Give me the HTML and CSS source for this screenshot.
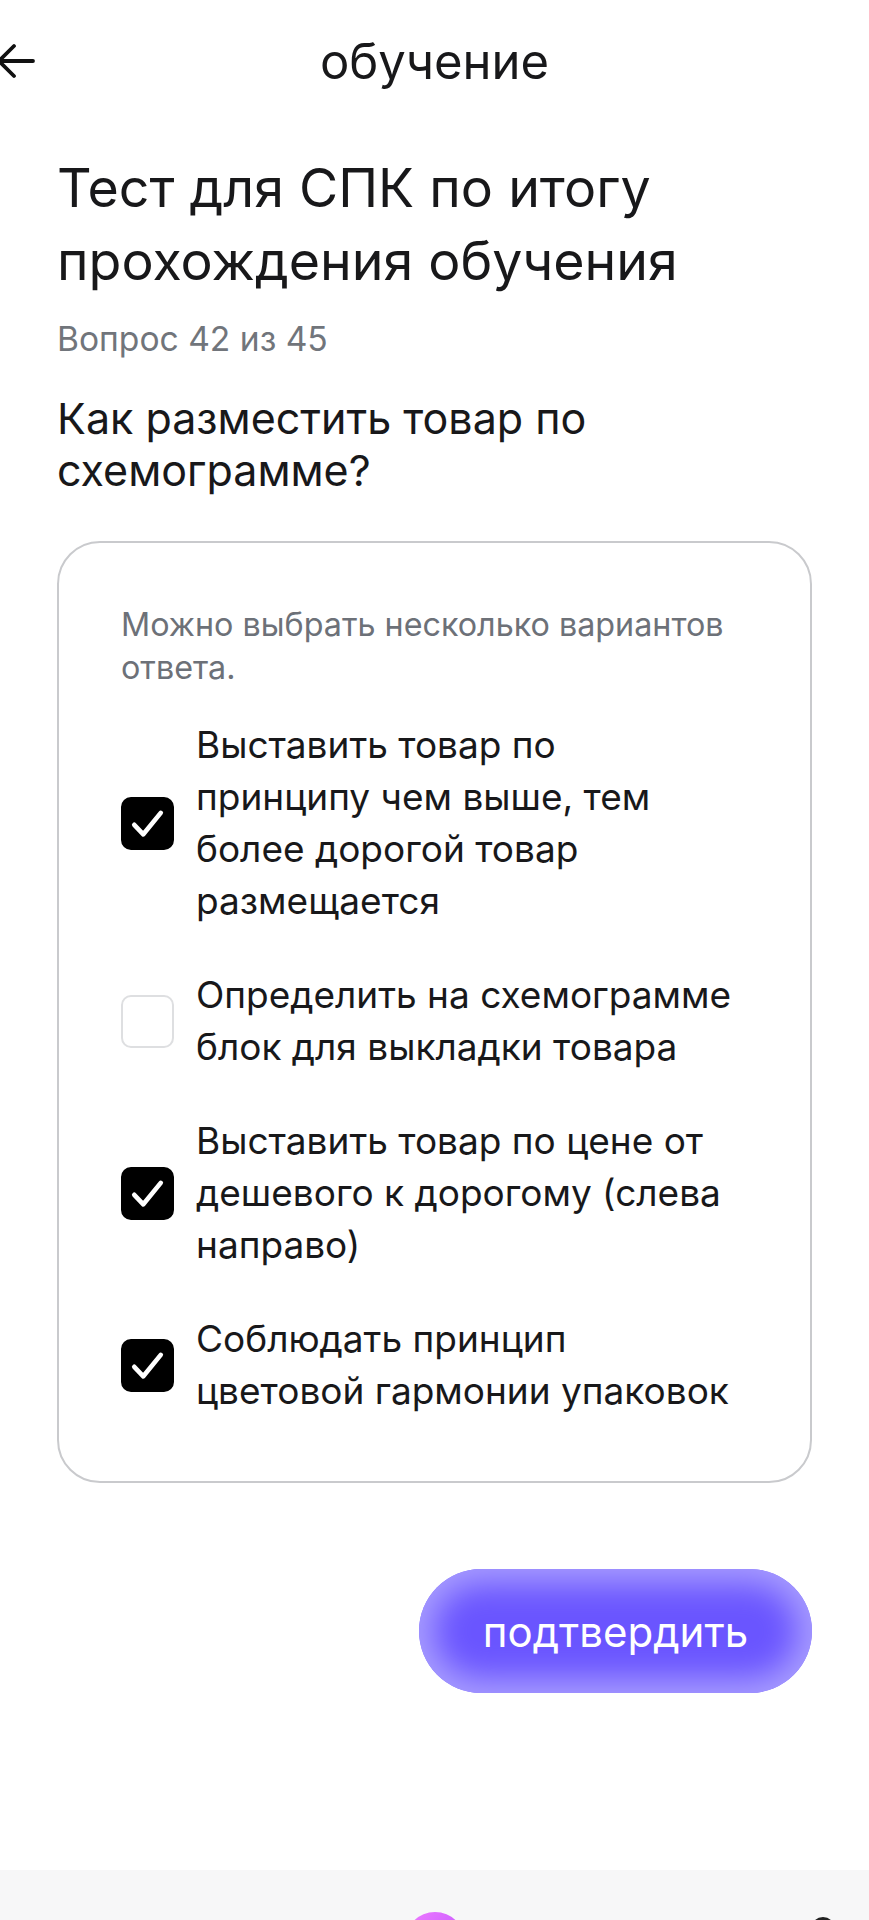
FILE: index.html
```html
<!DOCTYPE html>
<html lang="ru">
<head>
<meta charset="utf-8">
<title>обучение</title>
<link rel="stylesheet" href="styles.css">
</head>
<body>
<div class="page">
  <header class="topbar">
    <button class="back" aria-label="назад">
      <svg width="40" height="40" viewBox="0 0 40 40"><path d="M36 20H2M17 5L2 20L17 35" fill="none" stroke="#111" stroke-width="3.8" stroke-linecap="round" stroke-linejoin="round"/></svg>
    </button>
    <div class="title">обучение</div>
    <div></div>
  </header>
  <main class="content">
    <h1 class="heading">Тест для СПК по итогу прохождения обучения</h1>
    <div class="counter">Вопрос 42 из 45</div>
    <h2 class="question">Как разместить товар по схемограмме?</h2>
    <section class="card">
      <p class="hint">Можно выбрать несколько вариантов ответа.</p>
      <ul class="options">
        <li class="option">
          <span class="box checked"><svg viewBox="0 0 24 24"><path d="M6 12.6L10.1 16.9L18 7.2" fill="none" stroke="#fff" stroke-width="2.1" stroke-linecap="round" stroke-linejoin="round"/></svg></span>
          <span class="label">Выставить товар по принципу чем выше, тем более дорогой товар размещается</span>
        </li>
        <li class="option">
          <span class="box"></span>
          <span class="label">Определить на схемограмме блок для выкладки товара</span>
        </li>
        <li class="option">
          <span class="box checked"><svg viewBox="0 0 24 24"><path d="M6 12.6L10.1 16.9L18 7.2" fill="none" stroke="#fff" stroke-width="2.1" stroke-linecap="round" stroke-linejoin="round"/></svg></span>
          <span class="label">Выставить товар по цене от дешевого к дорогому (слева направо)</span>
        </li>
        <li class="option">
          <span class="box checked"><svg viewBox="0 0 24 24"><path d="M6 12.6L10.1 16.9L18 7.2" fill="none" stroke="#fff" stroke-width="2.1" stroke-linecap="round" stroke-linejoin="round"/></svg></span>
          <span class="label">Соблюдать принцип цветовой гармонии упаковок</span>
        </li>
      </ul>
    </section>
    <div class="actions">
      <button class="confirm">подтвердить</button>
    </div>
  </main>
  <nav class="tabbar">
    <span class="tab-spacer"></span>
    <span class="tab-orb"></span>
    <span class="tab-icon"></span>
  </nav>
</div>
</body>
</html>
```
FILE: styles.css
```css
* { box-sizing: border-box; }
html, body { margin: 0; padding: 0; background: #fff; }
body {
  font-family: Inter, "Noto Sans", sans-serif;
  color: #18181a;
  overflow: hidden;
}
.page {
  width: 869px;
  height: 1920px;
  display: flex;
  flex-direction: column;
  overflow: hidden;
}

.topbar {
  flex: 0 0 122px;
  display: grid;
  grid-template-columns: 1fr auto 1fr;
  align-items: center;
}
.back {
  justify-self: start;
  border: 0;
  background: none;
  padding: 0;
  margin-left: -3px;
  display: flex;
}
.title {
  font-size: 49px;
  font-weight: 400;
}

.content { padding: 0 57px; display: flex; flex-direction: column; }
.heading {
  margin: 29px 0 0;
  font-size: 53.7px;
  line-height: 73px;
  font-weight: 400;
}
.counter {
  margin-top: 22px;
  font-size: 33.6px;
  line-height: 40px;
  color: #71757b;
}
.question {
  margin: 33px 0 0;
  font-size: 43px;
  line-height: 52px;
  font-weight: 400;
}

.card {
  margin-top: 45px;
  border: 2px solid #c9cacd;
  border-radius: 43px;
  padding: 60px 74px 64px 62px;
}
.hint {
  margin: 0;
  font-size: 32.3px;
  line-height: 43px;
  color: #6d7178;
}
.options {
  list-style: none;
  margin: 30px 0 0;
  padding: 0;
  display: flex;
  flex-direction: column;
  gap: 42px;
}
.option {
  display: flex;
  align-items: center;
  gap: 22px;
}
.box {
  flex: 0 0 53px;
  width: 53px;
  height: 53px;
  border-radius: 10px;
  border: 2px solid #dedfe1;
  display: flex;
  align-items: center;
  justify-content: center;
}
.box.checked { background: #000; border-color: #000; }
.box svg { width: 53px; height: 53px; flex: none; }
.label {
  font-size: 37px;
  line-height: 52px;
}

.actions {
  margin-top: 86px;
  display: flex;
  justify-content: flex-end;
}
.confirm {
  width: 393px;
  height: 124px;
  border: 0;
  border-radius: 62px;
  background: #6a55ff;
  box-shadow: inset 0 0 32px 14px #a99eff;
  color: #fff;
  font-family: Inter, "Noto Sans", sans-serif;
  font-size: 42px;
  font-weight: 400;
}

.tabbar {
  margin-top: auto;
  flex: 0 0 50px;
  background: #f7f7f8;
  display: grid;
  grid-template-columns: 1fr auto 1fr;
  align-items: start;
  padding-top: 42px;
  overflow: hidden;
}
.tab-orb {
  width: 60px;
  height: 60px;
  border-radius: 50%;
  background: linear-gradient(135deg, #f07bff, #b44dff);
}
.tab-icon {
  justify-self: end;
  margin-right: 34px;
  margin-top: 5px;
  width: 24px;
  height: 24px;
  border-radius: 50%;
  border: 3px solid #222;
}
```
